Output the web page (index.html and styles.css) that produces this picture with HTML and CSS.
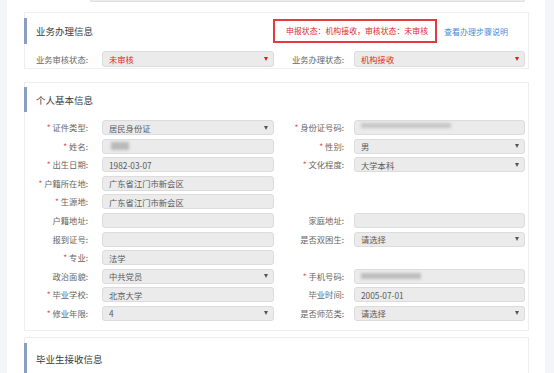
FILE: index.html
```html
<!DOCTYPE html>
<html lang="zh-CN">
<head>
<meta charset="utf-8">
<title>业务办理信息</title>
<link rel="stylesheet" href="styles.css">
</head>
<body>
<div class="side side-left"></div>
<div class="main">
  <div class="prev-bar"></div>

  <section class="panel panel-biz">
    <div class="panel-head">
      <span class="panel-title">业务办理信息</span>
      <div class="status-box">申报状态：机构接收，审核状态：未审核</div>
      <a class="help-link">查看办理步骤说明</a>
    </div>
    <div class="form-grid biz-grid">
      <label class="lbl">业务审核状态:</label>
      <div class="field sel red"><span>未审核</span><i class="arrow red-arrow"></i></div>
      <label class="lbl lbl2">业务办理状态:</label>
      <div class="field sel red"><span>机构接收</span><i class="arrow red-arrow"></i></div>
    </div>
  </section>

  <section class="panel panel-person">
    <div class="panel-head">
      <span class="panel-title">个人基本信息</span>
    </div>
    <div class="form-grid person-grid">
      <label class="lbl"><b>*</b> 证件类型:</label>
      <div class="field sel"><span>居民身份证</span><i class="arrow"></i></div>
      <label class="lbl lbl2"><b>*</b> 身份证号码:</label>
      <div class="field"><span class="blur blur-id"></span></div>

      <label class="lbl"><b>*</b> 姓名:</label>
      <div class="field"><span class="blur blur-name"></span></div>
      <label class="lbl lbl2"><b>*</b> 性别:</label>
      <div class="field sel"><span>男</span><i class="arrow"></i></div>

      <label class="lbl"><b>*</b> 出生日期:</label>
      <div class="field"><span>1982-03-07</span></div>
      <label class="lbl lbl2"><b>*</b> 文化程度:</label>
      <div class="field sel"><span>大学本科</span><i class="arrow"></i></div>

      <label class="lbl"><b>*</b> 户籍所在地:</label>
      <div class="field"><span>广东省江门市新会区</span></div>
      <span class="empty"></span>
      <span class="empty"></span>

      <label class="lbl"><b>*</b> 生源地:</label>
      <div class="field"><span>广东省江门市新会区</span></div>
      <span class="empty"></span>
      <span class="empty"></span>

      <label class="lbl">户籍地址:</label>
      <div class="field"></div>
      <label class="lbl lbl2">家庭地址:</label>
      <div class="field"></div>

      <label class="lbl">报到证号:</label>
      <div class="field"></div>
      <label class="lbl lbl2">是否双困生:</label>
      <div class="field sel"><span>请选择</span><i class="arrow"></i></div>

      <label class="lbl"><b>*</b> 专业:</label>
      <div class="field"><span>法学</span></div>
      <span class="empty"></span>
      <span class="empty"></span>

      <label class="lbl">政治面貌:</label>
      <div class="field sel"><span>中共党员</span><i class="arrow"></i></div>
      <label class="lbl lbl2"><b>*</b> 手机号码:</label>
      <div class="field"><span class="blur blur-phone"></span></div>

      <label class="lbl"><b>*</b> 毕业学校:</label>
      <div class="field"><span>北京大学</span></div>
      <label class="lbl lbl2">毕业时间:</label>
      <div class="field"><span>2005-07-01</span></div>

      <label class="lbl"><b>*</b> 修业年限:</label>
      <div class="field sel"><span>4</span><i class="arrow"></i></div>
      <label class="lbl lbl2">是否师范类:</label>
      <div class="field sel"><span>请选择</span><i class="arrow"></i></div>
    </div>
  </section>

  <section class="panel panel-recv">
    <div class="panel-head">
      <span class="panel-title">毕业生接收信息</span>
    </div>
  </section>
</div>
<div class="side side-right"></div>
</body>
</html>
```

FILE: styles.css
```css
html, body {
  margin: 0;
  padding: 0;
}
body {
  width: 554px;
  height: 373px;
  overflow: hidden;
  display: flex;
  background: #ffffff;
  font-family: "Noto Sans CJK SC", "Noto Sans", sans-serif;
  font-size: 8.3px;
  color: #555;
}
.side {
  flex: none;
  background: #f3f6f9;
}
.side-left { width: 7px; }
.side-right { width: 9px; }
.main {
  flex: 1;
  height: 373px;
  overflow: hidden;
  padding: 0 16px 0 17px;
  display: flex;
  flex-direction: column;
}
.prev-bar {
  flex: none;
  height: 2px;
  margin: 0 4px 0 66px;
  background: #ebebeb;
  border: 1px solid #e0e0e0;
  border-top: none;
  border-radius: 0 0 3px 3px;
  box-sizing: border-box;
}
.panel {
  border: 1px solid #eceef1;
  background: #fff;
  flex: none;
}
.panel-biz {
  margin-top: 10px;
  height: 57px;
  box-sizing: border-box;
  padding-top: 5px;
}
.panel-person {
  margin-top: 13px;
  padding-top: 4px;
  padding-bottom: 9px;
}
.panel-recv {
  margin-top: 6px;
  padding-top: 5px;
  flex: 1;
  border-bottom: none;
}
.panel-head {
  display: flex;
  align-items: center;
  height: 26px;
  margin-left: -1px;
  border-left: 3px solid #8a9fbf;
  padding-left: 9px;
  padding-right: 20px;
}
.panel-person .panel-head { height: 25px; }
.panel-recv .panel-head { height: 32px; }
.panel-title {
  font-size: 9.5px;
  color: #3a3a3a;
}
.status-box {
  margin-left: auto;
  width: 164px;
  height: 24px;
  box-sizing: border-box;
  border: 2px solid #e23b3b;
  color: #e02a2a;
  font-size: 7.9px;
  line-height: 20px;
  padding-left: 11px;
  white-space: nowrap;
}
.help-link {
  margin-left: 7px;
  color: #4a8bd6;
  font-size: 8px;
  white-space: nowrap;
}
.form-grid {
  display: grid;
  grid-template-columns: 77px 172px 80px 171px;
  grid-auto-rows: 15px;
  row-gap: 3.6px;
}
.biz-grid {
  margin-top: 7px;
  grid-auto-rows: 16px;
}
.person-grid {
  margin-top: 8px;
}
.lbl {
  text-align: right;
  padding-right: 14px;
  line-height: 15px;
  white-space: nowrap;
  color: #666;
}
.biz-grid .lbl { line-height: 16px; }
.lbl2 { padding-right: 10px; }
.lbl b {
  color: #e55;
  font-weight: normal;
}
.field {
  display: flex;
  align-items: center;
  justify-content: space-between;
  background: #ebebeb;
  border: 1px solid #dcdcdc;
  border-radius: 3px;
  box-sizing: border-box;
  padding: 0 5px 0 6px;
  color: #5a5a5a;
  white-space: nowrap;
  overflow: hidden;
}
.field.red { color: #e02a2a; }
.arrow {
  width: 0;
  height: 0;
  border-left: 2px solid transparent;
  border-right: 2px solid transparent;
  border-top: 4px solid #555;
}
.red-arrow { border-top-color: #d42020; }
.blur {
  display: block;
  background: #b9b9b9;
  filter: blur(1.5px);
}
.blur-name {
  width: 18px;
  height: 8px;
  margin-left: 2px;
}
.blur-id {
  width: 90px;
  height: 5px;
  background: #c6c6c6;
  margin-bottom: 4px;
}
.blur-phone {
  width: 60px;
  height: 6px;
  background: #bdbdbd;
}
```
